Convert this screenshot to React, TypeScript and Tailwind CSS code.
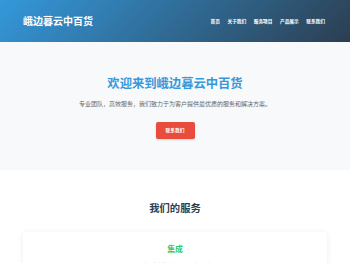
const cjk = "font-['Noto_Sans_CJK_SC','Noto_Sans',sans-serif]";

const navItems = ['首页', '关于我们', '服务项目', '产品展示', '联系我们'];

function Header() {
  return (
    <header className="flex h-[42px] items-center justify-between bg-[linear-gradient(135deg,#3498db,#2c3e50)] pl-[23px] pr-[25px] shadow-[0_1px_2px_rgba(0,0,0,0.15)]">
      <h1 className="m-0 text-[10px] font-bold leading-none text-white">峨边暮云中百货</h1>
      <nav className="flex gap-[7.5px]">
        {navItems.map((item) => (
          <a key={item} className="text-[4.7px] font-semibold leading-none text-white">
            {item}
          </a>
        ))}
      </nav>
    </header>
  );
}

function Hero() {
  return (
    <section className="flex flex-col items-center bg-[#f8f9fa] pb-[31px] pt-[35px]">
      <h2 className="m-0 text-[12.3px] font-bold leading-[12px] text-[#3498db]">欢迎来到峨边暮云中百货</h2>
      <p className="mt-[12px] text-[6px] leading-[6px] text-[#666]">
        专业团队，高效服务，我们致力于为客户提供最优质的服务和解决方案。
      </p>
      <button className="mt-[15px] flex h-[17px] w-[39px] items-center justify-center rounded-[2px] bg-[#e74c3c] text-[4.7px] font-semibold leading-none text-white shadow-[0_1px_2px_rgba(0,0,0,0.15)]">
        联系我们
      </button>
    </section>
  );
}

function Services() {
  return (
    <section className="flex flex-col items-center bg-white pt-[33px]">
      <h2 className="m-0 text-[10.3px] font-bold leading-[10px] text-[#2c3e50]">我们的服务</h2>
      <div className="mt-[19px] flex w-[304px] flex-col items-center rounded-[3px] bg-white pt-[13px] shadow-[0_1px_6px_rgba(0,0,0,0.08)]">
        <h3 className="m-0 text-[7.8px] font-bold leading-[8px] text-[#2ecc71]">集成</h3>
        <p className="mt-[10px] text-[4.5px] leading-none text-[#777]">提供专业的系统集成服务，满足需求</p>
        <div className="h-[20px]" />
      </div>
    </section>
  );
}

export default function App() {
  return (
    <div className={`${cjk} min-h-[263px] bg-white`}>
      <Header />
      <Hero />
      <Services />
    </div>
  );
}
